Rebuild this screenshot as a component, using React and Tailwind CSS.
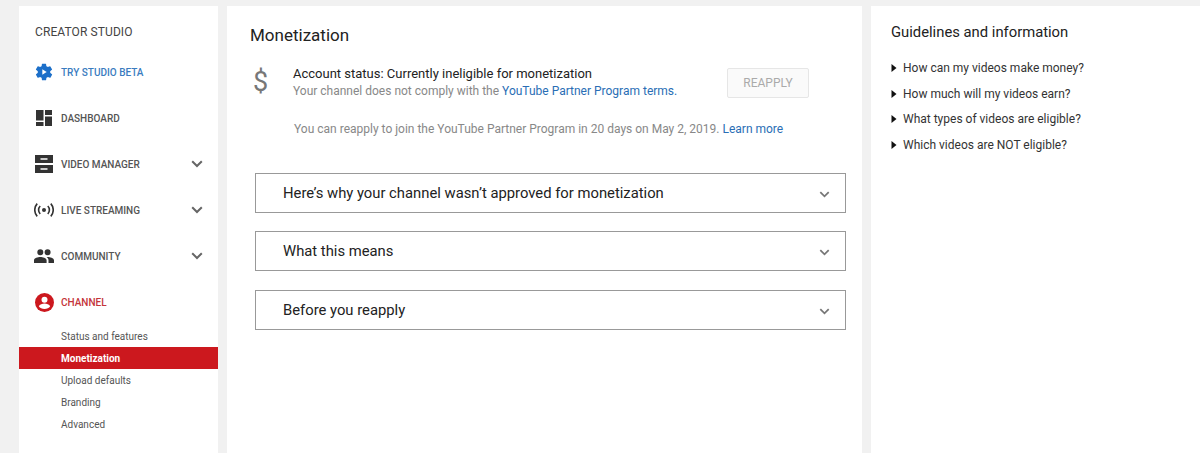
const GearPlay = () => (
  <svg width="22" height="22" viewBox="0 0 24 24" className="block" aria-hidden="true">
    <path fill="#1c6fc9" d="M19.4 13c.04-.33.1-.66.1-1s-.06-.67-.1-1l2.1-1.65c.2-.15.25-.42.13-.64l-2-3.46c-.12-.22-.4-.3-.6-.22l-2.5 1c-.52-.4-1.08-.73-1.7-.98l-.37-2.65A.5.5 0 0 0 14 2h-4a.5.5 0 0 0-.5.42l-.37 2.65c-.62.25-1.18.59-1.7.98l-2.5-1c-.22-.08-.48 0-.6.22l-2 3.46c-.13.22-.07.49.12.64L4.6 11c-.04.33-.1.66-.1 1s.06.67.1 1l-2.1 1.65c-.2.15-.25.42-.13.64l2 3.46c.12.22.4.3.6.22l2.5-1c.52.4 1.08.73 1.7.98l.37 2.65c.03.24.24.42.5.42h4c.25 0 .46-.18.5-.42l.37-2.65c.62-.25 1.18-.59 1.7-.98l2.5 1c.22.08.48 0 .6-.22l2-3.46c.13-.22.07-.49-.12-.64L19.4 13z" />
    <path fill="#fff" d="M10 8.600v6.800l5.200-3.400z" />
  </svg>
);
const Dashboard = () => (
  <svg width="16" height="16" viewBox="0 0 16 16" className="block" aria-hidden="true">
    <path fill="#333" d="M0 0h7.500v10.500H0zM9 0h7v5H9zM9 6.500h7V16H9zM0 12h7.500v4H0z" />
  </svg>
);
const VideoManager = () => (
  <svg width="18" height="18" viewBox="0 0 18 18" className="block" aria-hidden="true">
    <path fill="#333" fillRule="evenodd" d="M0 0h18v8H0zM5.500 3.200v1.500h7V3.200zM0 10h18v8H0zM5.500 13.200v1.500h7v-1.500z" />
  </svg>
);
const Live = () => (
  <svg width="20" height="14" viewBox="0 0 20 14" fill="none" stroke="#333" strokeWidth="1.6" className="block" aria-hidden="true">
    <circle cx="10" cy="7" r="2" fill="#333" stroke="none" />
    <path d="M6.200 3a5.800 5.800 0 0 0 0 8M13.800 3a5.800 5.800 0 0 1 0 8" />
    <path d="M3.200.600a9.600 9.600 0 0 0 0 12.800M16.800.600a9.600 9.600 0 0 1 0 12.800" />
  </svg>
);
const People = () => (
  <svg width="20" height="14" viewBox="0 0 20 14" className="block" aria-hidden="true">
    <path fill="#333" d="M6.300 6.200a3 3 0 1 0 0-6 3 3 0 0 0 0 6zM13.600 6.200a3 3 0 1 0 0-6 3 3 0 0 0 0 6zM6.300 8C4 8 0 9.100 0 11.300V14h12.600v-2.700C12.600 9.100 8.600 8 6.300 8zM13.600 8c-.3 0-.6 0-1 .05 1.200.85 1.900 1.950 1.900 3.250V14H20v-2.700C20 9.100 15.900 8 13.600 8z" />
  </svg>
);
const Account = () => (
  <svg width="19" height="19" viewBox="0 0 19 19" className="block" aria-hidden="true">
    <circle cx="9.500" cy="9.500" r="9.500" fill="#cc181e" />
    <circle cx="9.500" cy="6.800" r="3" fill="#fff" />
    <path fill="#fff" d="M3.800 13.200c.9-1.800 3.600-2.600 5.700-2.600s4.800.8 5.700 2.600c-1.200 1.700-3.300 2.800-5.700 2.800s-4.500-1.100-5.700-2.800z" />
  </svg>
);
const Chevron = ({ color = "#666", width = 12, height = 8, className = "" }) => (
  <svg width={width} height={height} viewBox="0 0 12 8" fill="none" stroke={color} strokeWidth="2" className={`block ${className}`} aria-hidden="true">
    <path d="M1.200 1.200 6 6l4.800-4.800" />
  </svg>
);
const Caret = () => (
  <svg width="6" height="8" viewBox="0 0 6 8" className="block shrink-0" aria-hidden="true">
    <path fill="#111" d="M.5 0 5.500 4 .5 8z" />
  </svg>
);

const navItems = [
  { label: "TRY STUDIO BETA", icon: <GearPlay />, text: "text-[#3a7cc0]" },
  { label: "DASHBOARD", icon: <Dashboard />, text: "text-[#555]" },
  { label: "VIDEO MANAGER", icon: <VideoManager />, text: "text-[#555]", chevron: true },
  { label: "LIVE STREAMING", icon: <Live />, text: "text-[#555]", chevron: true },
  { label: "COMMUNITY", icon: <People />, text: "text-[#555]", chevron: true },
  { label: "CHANNEL", icon: <Account />, text: "text-[#c4343a]" },
];
const subItems = ["Status and features", "Monetization", "Upload defaults", "Branding", "Advanced"];
const panels = ["Here’s why your channel wasn’t approved for monetization", "What this means", "Before you reapply"];
const guides = ["How can my videos make money?", "How much will my videos earn?", "What types of videos are eligible?", "Which videos are NOT eligible?"];

export default function App() {
  return (
    <div className="h-[453px] w-[1200px] overflow-hidden bg-[#f1f1f1] pt-[6px] pl-[19px] flex gap-[9px] font-['Roboto',sans-serif]">
      <aside className="w-[199px] shrink-0 bg-white pt-[17px]">
        <div className="pl-[16px] text-[12px] leading-[18px] tracking-[0.1px] text-[#444] font-normal">CREATOR STUDIO</div>
        <nav className="mt-[8px]">
          {navItems.map((n) => (
            <div key={n.label} className="h-[46px] flex items-center">
              <div className="w-[42px] pl-[15px] shrink-0">
                <div className="w-[20px] flex justify-center">{n.icon}</div>
              </div>
              <span className={`text-[10px] font-medium ${n.text}`}>{n.label}</span>
              {n.chevron && <Chevron className="ml-auto mr-[15px]" />}
            </div>
          ))}
        </nav>
        <ul>
          {subItems.map((s) => (
            <li
              key={s}
              className={`h-[22px] pl-[42px] flex items-center text-[10px] ${s === "Monetization" ? "bg-[#cc181e] text-white font-bold" : "text-[#555]"}`}
            >
              {s}
            </li>
          ))}
        </ul>
      </aside>

      <main className="w-[635px] shrink-0 bg-white pl-[23px] pt-[18px]">
        <h1 className="text-[17px] leading-[22px] font-normal text-[#222]">Monetization</h1>
        <div className="mt-[19px] flex">
          <div className="w-[43px] pl-[3px] pt-[2px] text-[27px] leading-[30px] text-[#777]">$</div>
          <div className="w-[434px]">
            <div className="text-[13px] leading-[17px] text-[#222]">Account status: Currently ineligible for monetization</div>
            <div className="text-[12px] leading-[19px] text-[#888]">
              Your channel does not comply with the <span className="text-[#2a6eb5]">YouTube Partner Program terms.</span>
            </div>
          </div>
          <div className="mt-[3px] h-[30px] w-[82px] flex items-center justify-center border border-[#e6e6e6] bg-[#fafafa] rounded-[2px] text-[12px] text-[#aaa]">
            REAPPLY
          </div>
        </div>
        <div className="mt-[19px] pl-[44px] text-[12px] leading-[18px] text-[#888]">
          You can reapply to join the YouTube Partner Program in 20 days on May 2, 2019. <span className="text-[#2a6eb5]">Learn more</span>
        </div>
        <div className="mt-[35px] ml-[5px] w-[591px] flex flex-col gap-[18.400px]">
          {panels.map((p) => (
            <div key={p} className="h-[40px] border border-[#999] flex items-center pl-[27px] pr-[15px]">
              <span className="text-[14.800px] font-normal text-[#222]">{p}</span>
              <Chevron width={11} height={7} color="#777" className="ml-auto mt-[3px]" />
            </div>
          ))}
        </div>
      </main>

      <section className="flex-1 bg-white pl-[20px] pt-[16px]">
        <h2 className="text-[14.800px] leading-[20px] font-normal text-[#222]">Guidelines and information</h2>
        <ul className="mt-[13px]">
          {guides.map((g) => (
            <li key={g} className="h-[25.700px] flex items-center gap-[6px] text-[12px] text-[#333]">
              <Caret />
              {g}
            </li>
          ))}
        </ul>
      </section>
    </div>
  );
}
